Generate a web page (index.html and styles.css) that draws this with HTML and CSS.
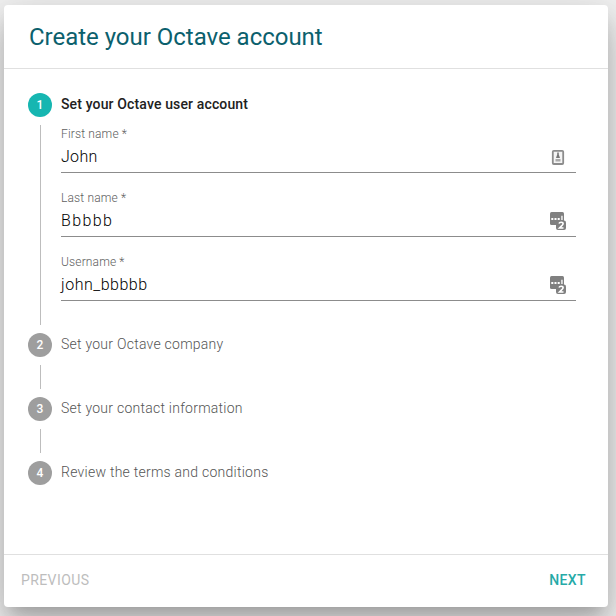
FILE: index.html
```html
<!DOCTYPE html>
<html lang="en">
<head>
<meta charset="utf-8">
<title>Create your Octave account</title>
<link rel="stylesheet" href="styles.css">
</head>
<body>
<main class="card">
  <header class="card-header"><h1 class="title">Create your Octave account</h1></header>
  <div class="stepper">
    <section class="step step-active">
      <div class="rail"><span class="badge">1</span><span class="line"></span></div>
      <div class="content">
        <h2 class="label">Set your Octave user account</h2>
        <div class="field">
          <span class="field-label">First name *</span>
          <div class="field-row"><span class="value value-first">John</span>
            <svg class="icon" viewBox="0 0 18 20"><rect x="3.800" y="3.800" width="10.400" height="13.200" rx="1" fill="#f4f4f4" stroke="#8c8c8c" stroke-width="1.800"/><path d="M8.200 5.500h1.600v2l1.200 3.500H7l1.200-3.500z" fill="#777"/><path d="M6.500 12h5v2.500h-5z" fill="#aaa"/></svg>
          </div>
        </div>
        <div class="field">
          <span class="field-label">Last name *</span>
          <div class="field-row"><span class="value value-wide">Bbbbb</span>
            <svg class="icon" viewBox="0 0 18 20"><rect x="1" y="1" width="14" height="13" rx="1.500" fill="#808080"/><path d="M2.300 7h2v2h-2zM5.500 7h2v2h-2zM8.700 7h2v2h-2zM12.300 4.800h1.300v4.200h-1.300z" fill="#fff"/><rect x="7" y="9.500" width="10" height="9.500" rx="2" fill="#808080"/><path d="M10 12.500q.4-1.200 2.100-1.200 2 0 2 1.500 0 .9-1.500 2.100L10.500 17h4" fill="none" stroke="#fff" stroke-width="1.600"/></svg>
          </div>
        </div>
        <div class="field">
          <span class="field-label">Username *</span>
          <div class="field-row"><span class="value value-user">john_bbbbb</span>
            <svg class="icon" viewBox="0 0 18 20"><rect x="1" y="1" width="14" height="13" rx="1.500" fill="#808080"/><path d="M2.300 7h2v2h-2zM5.500 7h2v2h-2zM8.700 7h2v2h-2zM12.300 4.800h1.300v4.200h-1.300z" fill="#fff"/><rect x="7" y="9.500" width="10" height="9.500" rx="2" fill="#808080"/><path d="M10 12.500q.4-1.200 2.100-1.200 2 0 2 1.500 0 .9-1.500 2.100L10.500 17h4" fill="none" stroke="#fff" stroke-width="1.600"/></svg>
          </div>
        </div>
      </div>
    </section>
    <section class="step">
      <div class="rail"><span class="badge">2</span><span class="line"></span></div>
      <div class="content"><h2 class="label">Set your Octave company</h2></div>
    </section>
    <section class="step">
      <div class="rail"><span class="badge">3</span><span class="line"></span></div>
      <div class="content"><h2 class="label">Set your contact information</h2></div>
    </section>
    <section class="step">
      <div class="rail"><span class="badge">4</span></div>
      <div class="content"><h2 class="label">Review the terms and conditions</h2></div>
    </section>
  </div>
  <footer class="card-footer">
    <button class="btn btn-disabled">PREVIOUS</button>
    <button class="btn btn-next">NEXT</button>
  </footer>
</main>
</body>
</html>
```
FILE: styles.css
```css
* { box-sizing: border-box; }
body {
  margin: 0;
  height: 616px;
  padding: 5px 8px 9px 4px;
  background: #f3f3f3;
  font-family: Roboto, sans-serif;
  overflow: hidden;
}
.card {
  height: 602px;
  display: flex;
  flex-direction: column;
  background: #fff;
  border-radius: 4px;
  box-shadow: 0 11px 15px -7px rgba(0,0,0,.2), 0 24px 38px 3px rgba(0,0,0,.14), 0 9px 46px 8px rgba(0,0,0,.12);
}
.card-header {
  height: 64px;
  padding: 0 24px 0 25px;
  border-bottom: 1px solid #e0e0e0;
}
.title {
  margin: 0;
  font-size: 24px;
  font-weight: 400;
  line-height: 64px;
  letter-spacing: -.02px;
  color: #0b606d;
}
.stepper { flex: 1; padding: 24px 32px 0 24px; }
.step { display: flex; gap: 9px; height: 64px; }
.step-active { height: 240px; }
.rail {
  width: 24px;
  display: flex;
  flex-direction: column;
  align-items: center;
}
.badge {
  width: 24px;
  height: 24px;
  border-radius: 50%;
  background: #9e9e9e;
  color: #fff;
  font-size: 12px;
  font-weight: 500;
  line-height: 24px;
  text-align: center;
}
.step-active .badge { background: #16b6b1; }
.line { flex: 1; width: 1px; margin: 8px 0; background: #bdbdbd; }
.content { flex: 1; }
.label {
  margin: 0;
  height: 24px;
  font-size: 14px;
  font-weight: 300;
  line-height: 22px;
  letter-spacing: .25px;
  color: #555;
}
.step-active .label { font-weight: 500; letter-spacing: .14px; color: #212121; }
.field { height: 64px; padding-top: 9px; }
.field-label {
  display: block;
  font-size: 12px;
  font-weight: 300;
  line-height: 16px;
  letter-spacing: .15px;
  color: #606060;
}
.field-row {
  display: flex;
  height: 31px;
  justify-content: space-between;
  align-items: center;
  padding: 0 9px 1px 0;
  border-bottom: 1px solid #8c8c8c;
}
.value { font-size: 16px; font-weight: 300; line-height: 28px; color: #000; }
.value-first { letter-spacing: .3px; }
.value-wide { letter-spacing: 1.4px; }
.value-user { letter-spacing: .5px; }
.icon { width: 18px; height: 20px; }
.card-footer {
  height: 53px;
  display: flex;
  justify-content: space-between;
  align-items: center;
  padding: 0 22px 2px 17px;
  border-top: 1px solid #e0e0e0;
}
.btn {
  padding: 0;
  border: 0;
  background: none;
  font: 400 14px/20px Roboto, sans-serif;
  letter-spacing: .4px;
}
.btn-disabled { color: #bdbdbd; }
.btn-next { font-weight: 500; color: #26aaa7; }
```
